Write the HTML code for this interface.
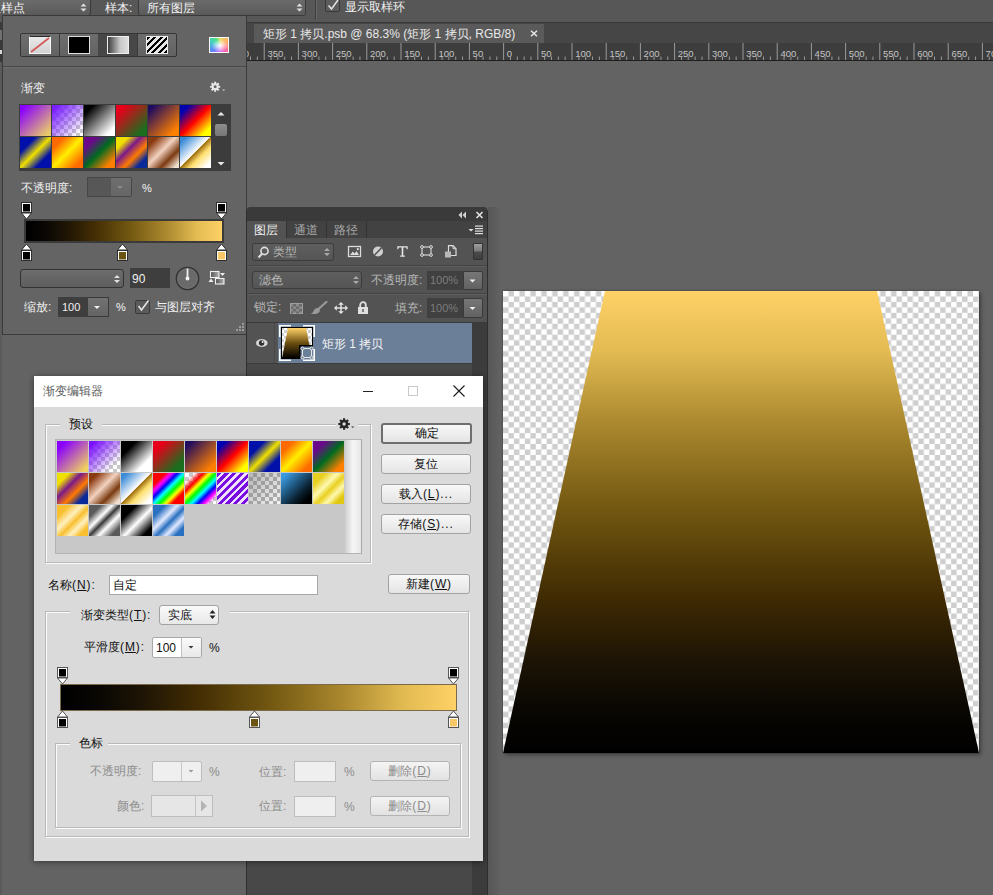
<!DOCTYPE html><html><head><meta charset="utf-8"><style>
*{margin:0;padding:0;box-sizing:border-box}
html,body{width:993px;height:895px;overflow:hidden;background:#636363;font-family:"Liberation Sans",sans-serif;}
.t{position:absolute;white-space:nowrap;line-height:1;}
.as{letter-spacing:0.9px}
div{position:absolute}
svg{display:block}
</style></head><body>
<div style="position:absolute;left:0px;top:0px;width:993px;height:23px;background:#575757;"></div>
<div style="position:absolute;left:0px;top:22px;width:993px;height:1px;background:#383838;"></div>
<div style="position:absolute;left:-10px;top:-2px;width:101px;height:18px;background:linear-gradient(#6c6c6c,#5a5a5a);border:1px solid #3a3a3a;border-radius:3px;"></div>
<div class="t" style="left:-11px;top:1.5px;font-size:12px;color:#f4f4f4;">取样点</div>
<div style="position:absolute;left:80px;top:3px;width:7px;height:9px;"><svg width="7" height="9"><path d="M0.5 3.5 L3.5 0.5 L6.5 3.5 Z M0.5 5.5 L6.5 5.5 L3.5 8.5 Z" fill="#e0e0e0"/></svg></div>
<div class="t" style="left:105px;top:1.5px;font-size:12px;color:#f4f4f4;">样本:</div>
<div style="position:absolute;left:138px;top:-2px;width:168px;height:18px;background:linear-gradient(#6c6c6c,#5a5a5a);border:1px solid #3a3a3a;border-radius:3px;"></div>
<div class="t" style="left:147px;top:1.5px;font-size:12px;color:#f4f4f4;">所有图层</div>
<div style="position:absolute;left:296px;top:3px;width:7px;height:9px;"><svg width="7" height="9"><path d="M0.5 3.5 L3.5 0.5 L6.5 3.5 Z M0.5 5.5 L6.5 5.5 L3.5 8.5 Z" fill="#e0e0e0"/></svg></div>
<div style="position:absolute;left:315px;top:0px;width:1px;height:20px;background:#3e3e3e;"></div>
<div style="position:absolute;left:316px;top:0px;width:1px;height:20px;background:#686868;"></div>
<div style="position:absolute;left:325px;top:-3px;width:15px;height:15px;background:#5c5c5c;border:1px solid #383838;border-radius:2px;"><svg width="14" height="14" style="position:absolute;left:0;top:0"><path d="M2.5 7.5 L5.5 11 L12 2" fill="none" stroke="#e0e0e0" stroke-width="1.6"/></svg></div>
<div class="t" style="left:345px;top:1px;font-size:12px;color:#f0f0f0;">显示取样环</div>
<div style="position:absolute;left:0px;top:15px;width:2px;height:880px;background:#5a5a5a;"></div>
<div style="position:absolute;left:0px;top:22px;width:2px;height:8px;background:#3a3a3a;"></div>
<div style="position:absolute;left:0px;top:30px;width:2px;height:10px;background:#707070;"></div>
<div style="position:absolute;left:0px;top:40px;width:2px;height:22px;background:#383838;"></div>
<div style="position:absolute;left:0px;top:50px;width:2px;height:4px;background:#d8d8d8;"></div>
<div style="position:absolute;left:247px;top:23px;width:746px;height:20px;background:#464646;"></div>
<div style="position:absolute;left:254px;top:24px;width:290px;height:19px;background:#5a5a5a;"></div>
<div class="t" style="left:263px;top:28px;font-size:12px;color:#e8e8e8;">矩形 1 拷贝.psb @ 68.3% (矩形 1 拷贝, RGB/8)</div>
<svg style="position:absolute;left:530px;top:30px" width="8" height="7"><path d="M1 0.8 L7 6.2 M7 0.8 L1 6.2" stroke="#e8e8e8" stroke-width="1.5"/></svg>
<div style="position:absolute;left:247px;top:43px;width:746px;height:17px;background:#3d3d3d;"></div>
<div style="position:absolute;left:247px;top:60px;width:746px;height:1px;background:#1e1e1e;"></div>
<svg style="position:absolute;left:247px;top:43px" width="746" height="17"><rect x="-17.50" y="0" width="1" height="17" fill="#9a9a9a"/><text x="-13.80" y="14" font-size="9.5" fill="#c4c4c4" font-family="Liberation Sans">400</text><rect x="-10.66" y="13.5" width="1" height="3.5" fill="#9a9a9a"/><rect x="-3.82" y="13.5" width="1" height="3.5" fill="#9a9a9a"/><rect x="3.02" y="13.5" width="1" height="3.5" fill="#9a9a9a"/><rect x="9.86" y="13.5" width="1" height="3.5" fill="#9a9a9a"/><rect x="16.70" y="0" width="1" height="17" fill="#9a9a9a"/><text x="20.40" y="14" font-size="9.5" fill="#c4c4c4" font-family="Liberation Sans">350</text><rect x="23.54" y="13.5" width="1" height="3.5" fill="#9a9a9a"/><rect x="30.38" y="13.5" width="1" height="3.5" fill="#9a9a9a"/><rect x="37.22" y="13.5" width="1" height="3.5" fill="#9a9a9a"/><rect x="44.06" y="13.5" width="1" height="3.5" fill="#9a9a9a"/><rect x="50.90" y="0" width="1" height="17" fill="#9a9a9a"/><text x="54.60" y="14" font-size="9.5" fill="#c4c4c4" font-family="Liberation Sans">300</text><rect x="57.74" y="13.5" width="1" height="3.5" fill="#9a9a9a"/><rect x="64.58" y="13.5" width="1" height="3.5" fill="#9a9a9a"/><rect x="71.42" y="13.5" width="1" height="3.5" fill="#9a9a9a"/><rect x="78.26" y="13.5" width="1" height="3.5" fill="#9a9a9a"/><rect x="85.10" y="0" width="1" height="17" fill="#9a9a9a"/><text x="88.80" y="14" font-size="9.5" fill="#c4c4c4" font-family="Liberation Sans">250</text><rect x="91.94" y="13.5" width="1" height="3.5" fill="#9a9a9a"/><rect x="98.78" y="13.5" width="1" height="3.5" fill="#9a9a9a"/><rect x="105.62" y="13.5" width="1" height="3.5" fill="#9a9a9a"/><rect x="112.46" y="13.5" width="1" height="3.5" fill="#9a9a9a"/><rect x="119.30" y="0" width="1" height="17" fill="#9a9a9a"/><text x="123.00" y="14" font-size="9.5" fill="#c4c4c4" font-family="Liberation Sans">200</text><rect x="126.14" y="13.5" width="1" height="3.5" fill="#9a9a9a"/><rect x="132.98" y="13.5" width="1" height="3.5" fill="#9a9a9a"/><rect x="139.82" y="13.5" width="1" height="3.5" fill="#9a9a9a"/><rect x="146.66" y="13.5" width="1" height="3.5" fill="#9a9a9a"/><rect x="153.50" y="0" width="1" height="17" fill="#9a9a9a"/><text x="157.20" y="14" font-size="9.5" fill="#c4c4c4" font-family="Liberation Sans">150</text><rect x="160.34" y="13.5" width="1" height="3.5" fill="#9a9a9a"/><rect x="167.18" y="13.5" width="1" height="3.5" fill="#9a9a9a"/><rect x="174.02" y="13.5" width="1" height="3.5" fill="#9a9a9a"/><rect x="180.86" y="13.5" width="1" height="3.5" fill="#9a9a9a"/><rect x="187.70" y="0" width="1" height="17" fill="#9a9a9a"/><text x="191.40" y="14" font-size="9.5" fill="#c4c4c4" font-family="Liberation Sans">100</text><rect x="194.54" y="13.5" width="1" height="3.5" fill="#9a9a9a"/><rect x="201.38" y="13.5" width="1" height="3.5" fill="#9a9a9a"/><rect x="208.22" y="13.5" width="1" height="3.5" fill="#9a9a9a"/><rect x="215.06" y="13.5" width="1" height="3.5" fill="#9a9a9a"/><rect x="221.90" y="0" width="1" height="17" fill="#9a9a9a"/><text x="225.60" y="14" font-size="9.5" fill="#c4c4c4" font-family="Liberation Sans">50</text><rect x="228.74" y="13.5" width="1" height="3.5" fill="#9a9a9a"/><rect x="235.58" y="13.5" width="1" height="3.5" fill="#9a9a9a"/><rect x="242.42" y="13.5" width="1" height="3.5" fill="#9a9a9a"/><rect x="249.26" y="13.5" width="1" height="3.5" fill="#9a9a9a"/><rect x="256.10" y="0" width="1" height="17" fill="#9a9a9a"/><text x="259.80" y="14" font-size="9.5" fill="#c4c4c4" font-family="Liberation Sans">0</text><rect x="262.94" y="13.5" width="1" height="3.5" fill="#9a9a9a"/><rect x="269.78" y="13.5" width="1" height="3.5" fill="#9a9a9a"/><rect x="276.62" y="13.5" width="1" height="3.5" fill="#9a9a9a"/><rect x="283.46" y="13.5" width="1" height="3.5" fill="#9a9a9a"/><rect x="290.30" y="0" width="1" height="17" fill="#9a9a9a"/><text x="294.00" y="14" font-size="9.5" fill="#c4c4c4" font-family="Liberation Sans">50</text><rect x="297.14" y="13.5" width="1" height="3.5" fill="#9a9a9a"/><rect x="303.98" y="13.5" width="1" height="3.5" fill="#9a9a9a"/><rect x="310.82" y="13.5" width="1" height="3.5" fill="#9a9a9a"/><rect x="317.66" y="13.5" width="1" height="3.5" fill="#9a9a9a"/><rect x="324.50" y="0" width="1" height="17" fill="#9a9a9a"/><text x="328.20" y="14" font-size="9.5" fill="#c4c4c4" font-family="Liberation Sans">100</text><rect x="331.34" y="13.5" width="1" height="3.5" fill="#9a9a9a"/><rect x="338.18" y="13.5" width="1" height="3.5" fill="#9a9a9a"/><rect x="345.02" y="13.5" width="1" height="3.5" fill="#9a9a9a"/><rect x="351.86" y="13.5" width="1" height="3.5" fill="#9a9a9a"/><rect x="358.70" y="0" width="1" height="17" fill="#9a9a9a"/><text x="362.40" y="14" font-size="9.5" fill="#c4c4c4" font-family="Liberation Sans">150</text><rect x="365.54" y="13.5" width="1" height="3.5" fill="#9a9a9a"/><rect x="372.38" y="13.5" width="1" height="3.5" fill="#9a9a9a"/><rect x="379.22" y="13.5" width="1" height="3.5" fill="#9a9a9a"/><rect x="386.06" y="13.5" width="1" height="3.5" fill="#9a9a9a"/><rect x="392.90" y="0" width="1" height="17" fill="#9a9a9a"/><text x="396.60" y="14" font-size="9.5" fill="#c4c4c4" font-family="Liberation Sans">200</text><rect x="399.74" y="13.5" width="1" height="3.5" fill="#9a9a9a"/><rect x="406.58" y="13.5" width="1" height="3.5" fill="#9a9a9a"/><rect x="413.42" y="13.5" width="1" height="3.5" fill="#9a9a9a"/><rect x="420.26" y="13.5" width="1" height="3.5" fill="#9a9a9a"/><rect x="427.10" y="0" width="1" height="17" fill="#9a9a9a"/><text x="430.80" y="14" font-size="9.5" fill="#c4c4c4" font-family="Liberation Sans">250</text><rect x="433.94" y="13.5" width="1" height="3.5" fill="#9a9a9a"/><rect x="440.78" y="13.5" width="1" height="3.5" fill="#9a9a9a"/><rect x="447.62" y="13.5" width="1" height="3.5" fill="#9a9a9a"/><rect x="454.46" y="13.5" width="1" height="3.5" fill="#9a9a9a"/><rect x="461.30" y="0" width="1" height="17" fill="#9a9a9a"/><text x="465.00" y="14" font-size="9.5" fill="#c4c4c4" font-family="Liberation Sans">300</text><rect x="468.14" y="13.5" width="1" height="3.5" fill="#9a9a9a"/><rect x="474.98" y="13.5" width="1" height="3.5" fill="#9a9a9a"/><rect x="481.82" y="13.5" width="1" height="3.5" fill="#9a9a9a"/><rect x="488.66" y="13.5" width="1" height="3.5" fill="#9a9a9a"/><rect x="495.50" y="0" width="1" height="17" fill="#9a9a9a"/><text x="499.20" y="14" font-size="9.5" fill="#c4c4c4" font-family="Liberation Sans">350</text><rect x="502.34" y="13.5" width="1" height="3.5" fill="#9a9a9a"/><rect x="509.18" y="13.5" width="1" height="3.5" fill="#9a9a9a"/><rect x="516.02" y="13.5" width="1" height="3.5" fill="#9a9a9a"/><rect x="522.86" y="13.5" width="1" height="3.5" fill="#9a9a9a"/><rect x="529.70" y="0" width="1" height="17" fill="#9a9a9a"/><text x="533.40" y="14" font-size="9.5" fill="#c4c4c4" font-family="Liberation Sans">400</text><rect x="536.54" y="13.5" width="1" height="3.5" fill="#9a9a9a"/><rect x="543.38" y="13.5" width="1" height="3.5" fill="#9a9a9a"/><rect x="550.22" y="13.5" width="1" height="3.5" fill="#9a9a9a"/><rect x="557.06" y="13.5" width="1" height="3.5" fill="#9a9a9a"/><rect x="563.90" y="0" width="1" height="17" fill="#9a9a9a"/><text x="567.60" y="14" font-size="9.5" fill="#c4c4c4" font-family="Liberation Sans">450</text><rect x="570.74" y="13.5" width="1" height="3.5" fill="#9a9a9a"/><rect x="577.58" y="13.5" width="1" height="3.5" fill="#9a9a9a"/><rect x="584.42" y="13.5" width="1" height="3.5" fill="#9a9a9a"/><rect x="591.26" y="13.5" width="1" height="3.5" fill="#9a9a9a"/><rect x="598.10" y="0" width="1" height="17" fill="#9a9a9a"/><text x="601.80" y="14" font-size="9.5" fill="#c4c4c4" font-family="Liberation Sans">500</text><rect x="604.94" y="13.5" width="1" height="3.5" fill="#9a9a9a"/><rect x="611.78" y="13.5" width="1" height="3.5" fill="#9a9a9a"/><rect x="618.62" y="13.5" width="1" height="3.5" fill="#9a9a9a"/><rect x="625.46" y="13.5" width="1" height="3.5" fill="#9a9a9a"/><rect x="632.30" y="0" width="1" height="17" fill="#9a9a9a"/><text x="636.00" y="14" font-size="9.5" fill="#c4c4c4" font-family="Liberation Sans">550</text><rect x="639.14" y="13.5" width="1" height="3.5" fill="#9a9a9a"/><rect x="645.98" y="13.5" width="1" height="3.5" fill="#9a9a9a"/><rect x="652.82" y="13.5" width="1" height="3.5" fill="#9a9a9a"/><rect x="659.66" y="13.5" width="1" height="3.5" fill="#9a9a9a"/><rect x="666.50" y="0" width="1" height="17" fill="#9a9a9a"/><text x="670.20" y="14" font-size="9.5" fill="#c4c4c4" font-family="Liberation Sans">600</text><rect x="673.34" y="13.5" width="1" height="3.5" fill="#9a9a9a"/><rect x="680.18" y="13.5" width="1" height="3.5" fill="#9a9a9a"/><rect x="687.02" y="13.5" width="1" height="3.5" fill="#9a9a9a"/><rect x="693.86" y="13.5" width="1" height="3.5" fill="#9a9a9a"/><rect x="700.70" y="0" width="1" height="17" fill="#9a9a9a"/><text x="704.40" y="14" font-size="9.5" fill="#c4c4c4" font-family="Liberation Sans">650</text><rect x="707.54" y="13.5" width="1" height="3.5" fill="#9a9a9a"/><rect x="714.38" y="13.5" width="1" height="3.5" fill="#9a9a9a"/><rect x="721.22" y="13.5" width="1" height="3.5" fill="#9a9a9a"/><rect x="728.06" y="13.5" width="1" height="3.5" fill="#9a9a9a"/><rect x="734.90" y="0" width="1" height="17" fill="#9a9a9a"/><text x="738.60" y="14" font-size="9.5" fill="#c4c4c4" font-family="Liberation Sans">700</text><rect x="741.74" y="13.5" width="1" height="3.5" fill="#9a9a9a"/><rect x="748.58" y="13.5" width="1" height="3.5" fill="#9a9a9a"/><rect x="755.42" y="13.5" width="1" height="3.5" fill="#9a9a9a"/><rect x="762.26" y="13.5" width="1" height="3.5" fill="#9a9a9a"/></svg>
<div style="position:absolute;left:503px;top:291px;width:476px;height:462px;background:#fff;box-shadow:2px 2px 4px rgba(0,0,0,0.35),0 0 2px rgba(0,0,0,0.35);"></div>
<svg style="position:absolute;left:503px;top:291px" width="476" height="462"><defs><pattern id="cp" width="10.93" height="10.93" patternUnits="userSpaceOnUse"><rect width="10.93" height="10.93" fill="#fff"/><rect x="5.465" y="0" width="5.465" height="5.465" fill="#cecece"/><rect x="0" y="5.465" width="5.465" height="5.465" fill="#cecece"/></pattern><linearGradient id="cg" x1="0" y1="1" x2="0" y2="0"><stop offset="0" stop-color="#000"/><stop offset="0.1" stop-color="#0a0703"/><stop offset="0.2" stop-color="#1d1405"/><stop offset="0.35" stop-color="#432d03"/><stop offset="0.54" stop-color="#755a12"/><stop offset="0.72" stop-color="#ad8a30"/><stop offset="0.87" stop-color="#e2bb52"/><stop offset="1" stop-color="#ffd166"/></linearGradient></defs><rect width="476" height="462" fill="url(#cp)"/><polygon points="102,0 374,0 476,462 0,462" fill="url(#cg)"/></svg>
<div style="position:absolute;left:2px;top:15px;width:245px;height:320px;background:#646464;border:1px solid #3a3a3a;"></div>
<div style="position:absolute;left:20px;top:33px;width:157px;height:24px;background:linear-gradient(#6e6e6e,#626262);border:1px solid #353535;border-radius:2px;"></div>
<div style="position:absolute;left:98px;top:34px;width:39px;height:22px;background:#474747;"></div>
<div style="position:absolute;left:59px;top:34px;width:1px;height:22px;background:#3a3a3a;"></div>
<div style="position:absolute;left:137px;top:34px;width:1px;height:22px;background:#3a3a3a;"></div>
<div style="position:absolute;left:29px;top:36px;width:22px;height:18px;background:linear-gradient(#eaeaea,#d2d2d2);border:1px solid #f4f4f4;border-top-color:#2a2a2a;"><svg width="20" height="16" style="position:absolute;left:0;top:0"><line x1="1" y1="15" x2="19" y2="1" stroke="#d45a5a" stroke-width="1.8"/></svg></div>
<div style="position:absolute;left:68px;top:36px;width:22px;height:18px;background:#000;border:1px solid #e0e0e0;border-top-color:#d8d8d8;"></div>
<div style="position:absolute;left:107px;top:36px;width:22px;height:18px;background:linear-gradient(90deg,#3e3e3e,#c8c8c8 60%,#dedede);border:1px solid #eeeeee;"></div>
<div style="position:absolute;left:146px;top:36px;width:22px;height:18px;background:repeating-linear-gradient(-45deg,#000 0 2.3px,#e6e6e6 2.3px 4.6px);border:1px solid #eeeeee;"></div>
<div style="position:absolute;left:209px;top:37px;width:20px;height:16px;border:1.5px solid #f8f8f8;background:radial-gradient(ellipse at 55% 55%,#fff 0,rgba(255,255,255,0.6) 25%,rgba(255,255,255,0) 60%),conic-gradient(from 0deg at 55% 50%,#e0e070,#ffb060 60deg,#ff60a0 130deg,#d070f0 180deg,#6080ff 230deg,#40d0c0 290deg,#50e080 330deg,#e0e070);"></div>
<div style="position:absolute;left:3px;top:66px;width:243px;height:1px;background:#474747;"></div>
<div style="position:absolute;left:3px;top:67px;width:243px;height:1px;background:#6c6c6c;"></div>
<div class="t" style="left:21px;top:82px;font-size:12px;color:#f0f0f0;">渐变</div>
<svg style="position:absolute;left:209px;top:81px" width="18" height="12"><g transform="translate(0.8 0.5) scale(0.88)"><circle cx="6.1" cy="6" r="3.9" fill="#e8e8e8"/><rect x="5" y="0.3" width="2.2" height="3" transform="rotate(0 6.1 6)" fill="#e8e8e8"/><rect x="5" y="0.3" width="2.2" height="3" transform="rotate(45 6.1 6)" fill="#e8e8e8"/><rect x="5" y="0.3" width="2.2" height="3" transform="rotate(90 6.1 6)" fill="#e8e8e8"/><rect x="5" y="0.3" width="2.2" height="3" transform="rotate(135 6.1 6)" fill="#e8e8e8"/><rect x="5" y="0.3" width="2.2" height="3" transform="rotate(180 6.1 6)" fill="#e8e8e8"/><rect x="5" y="0.3" width="2.2" height="3" transform="rotate(225 6.1 6)" fill="#e8e8e8"/><rect x="5" y="0.3" width="2.2" height="3" transform="rotate(270 6.1 6)" fill="#e8e8e8"/><rect x="5" y="0.3" width="2.2" height="3" transform="rotate(315 6.1 6)" fill="#e8e8e8"/><circle cx="6.1" cy="6" r="1.7" fill="#646464"/></g><path d="M13.2 8.5 L16.2 8.5 L14.7 10 Z" fill="#d8d8d8"/></svg>
<div style="position:absolute;left:19px;top:104px;width:212px;height:67px;background:#3c3c3c;"></div>
<div style="position:absolute;left:20px;top:105px;width:31px;height:31px;background:linear-gradient(135deg,#8a00ff 10%,#e9c86a 90%);"></div>
<div style="position:absolute;left:52px;top:105px;width:31px;height:31px;background:linear-gradient(135deg,#7a20ff 10%,rgba(160,120,255,0) 90%),repeating-conic-gradient(#c8c8c8 0 25%,#ffffff 0 50%) 0 0/8px 8px;"></div>
<div style="position:absolute;left:84px;top:105px;width:31px;height:31px;background:linear-gradient(135deg,#000 15%,#fff 85%);"></div>
<div style="position:absolute;left:116px;top:105px;width:31px;height:31px;background:linear-gradient(135deg,#e8001a 15%,#1a6e1e 85%);"></div>
<div style="position:absolute;left:148px;top:105px;width:31px;height:31px;background:linear-gradient(135deg,#1e0a60 10%,#ff8000 85%);"></div>
<div style="position:absolute;left:180px;top:105px;width:31px;height:31px;background:linear-gradient(135deg,#0000b0 15%,#ff0000 50%,#ffff00 85%);"></div>
<div style="position:absolute;left:20px;top:137px;width:31px;height:31px;background:linear-gradient(135deg,#0010a8 25%,#f0e000 50%,#0010a8 75%);"></div>
<div style="position:absolute;left:52px;top:137px;width:31px;height:31px;background:linear-gradient(135deg,#ff6a00 20%,#ffee00 50%,#ff6a00 85%);"></div>
<div style="position:absolute;left:84px;top:137px;width:31px;height:31px;background:linear-gradient(135deg,#6a0a8a 20%,#006a20 50%,#ff8000 85%);"></div>
<div style="position:absolute;left:116px;top:137px;width:31px;height:31px;background:linear-gradient(135deg,#f0e000 20%,#7a1a8a 40%,#ff7a00 62%,#0a2a9a 82%);"></div>
<div style="position:absolute;left:148px;top:137px;width:31px;height:31px;background:linear-gradient(135deg,#8a3a10 15%,#f2d2c0 45%,#7a3a10 70%,#f0e0d0 92%);"></div>
<div style="position:absolute;left:180px;top:137px;width:31px;height:31px;background:linear-gradient(135deg,#3a8ad6 10%,#ffffff 48%,#a07010 50%,#ffe070 65%,#ffffff 90%);"></div>
<div style="position:absolute;left:214px;top:111px;width:14px;height:6px;"><svg width="14" height="6"><path d="M3.5 4.5 L7 1 L10.5 4.5 Z" fill="#e8e8e8"/></svg></div>
<div style="position:absolute;left:215px;top:124px;width:12px;height:12px;background:linear-gradient(#8e8e8e,#767676);border-radius:2px;"></div>
<div style="position:absolute;left:214px;top:161px;width:14px;height:6px;"><svg width="14" height="6"><path d="M3.5 1 L10.5 1 L7 4.5 Z" fill="#e8e8e8"/></svg></div>
<div class="t" style="left:21px;top:182px;font-size:12px;color:#f0f0f0;">不透明度:</div>
<div style="position:absolute;left:87px;top:177px;width:25px;height:20px;background:#575757;border:1px solid #464646;border-right:none;"></div>
<div style="position:absolute;left:111px;top:177px;width:21px;height:20px;background:linear-gradient(#6e6e6e,#666);border:1px solid #464646;border-left:none;border-radius:0 2px 2px 0;"><svg width="19" height="18" style="position:absolute;left:0;top:0"><path d="M6 8 L12 8 L9 11 Z" fill="#8a8a8a"/></svg></div>
<div class="t" style="left:142px;top:183px;font-size:11px;color:#f4f4f4;">%</div>
<svg style="position:absolute;left:21px;top:202px" width="12" height="18"><path d="M0.5 11 L10.5 11 L5.5 17 Z" fill="#fff" stroke="#2e2e2e" stroke-width="1"/><rect x="0.5" y="0.5" width="10" height="10" fill="#fff" stroke="#2e2e2e"/><rect x="2" y="2" width="7" height="7.5" fill="#000"/></svg>
<svg style="position:absolute;left:216px;top:202px" width="12" height="18"><path d="M0.5 11 L10.5 11 L5.5 17 Z" fill="#fff" stroke="#2e2e2e" stroke-width="1"/><rect x="0.5" y="0.5" width="10" height="10" fill="#fff" stroke="#2e2e2e"/><rect x="2" y="2" width="7" height="7.5" fill="#000"/></svg>
<div style="position:absolute;left:24px;top:219px;width:200px;height:24px;background:#3a3a3a;"></div>
<div style="position:absolute;left:26px;top:221px;width:196px;height:20px;background:linear-gradient(90deg,#000 0%,#0a0703 10%,#1d1405 20%,#432d03 35%,#755a12 54%,#ad8a30 72%,#e2bb52 87%,#ffd166 100%);"></div>
<svg style="position:absolute;left:21px;top:244px" width="12" height="18"><path d="M0.5 6 L10.5 6 L5.5 0 Z" fill="#fff" stroke="#2e2e2e" stroke-width="1"/><rect x="0.5" y="6.5" width="10" height="10" fill="#fff" stroke="#2e2e2e"/><rect x="2" y="8" width="7" height="7.5" fill="#000"/></svg>
<svg style="position:absolute;left:117px;top:244px" width="12" height="18"><path d="M0.5 6 L10.5 6 L5.5 0 Z" fill="#fff" stroke="#2e2e2e" stroke-width="1"/><rect x="0.5" y="6.5" width="10" height="10" fill="#fff" stroke="#2e2e2e"/><rect x="2" y="8" width="7" height="7.5" fill="#6b5410"/></svg>
<svg style="position:absolute;left:216px;top:244px" width="12" height="18"><path d="M0.5 6 L10.5 6 L5.5 0 Z" fill="#fff" stroke="#2e2e2e" stroke-width="1"/><rect x="0.5" y="6.5" width="10" height="10" fill="#fff" stroke="#2e2e2e"/><rect x="2" y="8" width="7" height="7.5" fill="#f8c866"/></svg>
<div style="position:absolute;left:20px;top:269px;width:104px;height:19px;background:linear-gradient(#6c6c6c,#5e5e5e);border:1px solid #333;border-radius:3px;"><svg width="10" height="14" style="position:absolute;left:91px;top:2px"><path d="M2 6 L5 3 L8 6 Z M2 8 L8 8 L5 11 Z" fill="#e0e0e0"/></svg></div>
<div style="position:absolute;left:130px;top:268px;width:40px;height:20px;background:#3e3e3e;"></div>
<div class="t" style="left:132px;top:273px;font-size:12px;color:#f0f0f0;">90</div>
<svg style="position:absolute;left:175px;top:266px" width="25" height="25"><circle cx="12.5" cy="12.5" r="11.2" fill="#6a6a6a" stroke="#333" stroke-width="1.3"/><circle cx="12.5" cy="12.5" r="9.8" fill="none" stroke="#747474" stroke-width="0.8"/><line x1="12.5" y1="2.5" x2="12.5" y2="12" stroke="#ececec" stroke-width="1.8"/><circle cx="12.5" cy="12.5" r="1.9" fill="#f4f4f4"/></svg>
<svg style="position:absolute;left:208px;top:270px" width="18" height="15"><defs><linearGradient id="rv" x1="0" x2="1"><stop offset="0" stop-color="#505050"/><stop offset="1" stop-color="#b0b0b0"/></linearGradient></defs><rect x="2.5" y="1.5" width="8.5" height="6" fill="url(#rv)" stroke="#eee" stroke-width="1.1"/><rect x="7.5" y="8.5" width="8.5" height="5.5" fill="url(#rv)" stroke="#eee" stroke-width="1.1"/><path d="M12 3 L17 3 L14.5 6 Z" fill="#eee"/><path d="M0.5 12 L5.5 12 L3 8.5 Z" fill="#eee"/></svg>
<div class="t" style="left:24px;top:301px;font-size:12px;color:#f0f0f0;">缩放:</div>
<div style="position:absolute;left:58px;top:297px;width:31px;height:20px;background:#3e3e3e;"></div>
<div class="t" style="left:62px;top:302px;font-size:11px;color:#f0f0f0;">100</div>
<div style="position:absolute;left:88px;top:297px;width:21px;height:20px;background:linear-gradient(#727272,#646464);border:1px solid #3a3a3a;border-left:none;"><svg width="20" height="18" style="position:absolute;left:0;top:0"><path d="M6 8 L12 8 L9 11 Z" fill="#f0f0f0"/></svg></div>
<div class="t" style="left:116px;top:302px;font-size:11px;color:#f4f4f4;">%</div>
<div style="position:absolute;left:135px;top:300px;width:15px;height:14px;background:#5a5a5a;border:1px solid #3a3a3a;border-radius:2px;"><svg width="14" height="14" style="position:absolute;left:0;top:-2px"><path d="M2.5 7 L5.5 11 L12.5 1.5" fill="none" stroke="#e6e6e6" stroke-width="1.6"/></svg></div>
<div class="t" style="left:155px;top:301px;font-size:12px;color:#f0f0f0;">与图层对齐</div>
<svg style="position:absolute;left:236px;top:323px" width="9" height="10"><g fill="#9a9a9a"><rect x="6" y="0" width="2" height="2"/><rect x="3" y="3" width="2" height="2"/><rect x="6" y="3" width="2" height="2"/><rect x="0" y="6" width="2" height="2"/><rect x="3" y="6" width="2" height="2"/><rect x="6" y="6" width="2" height="2"/></g></svg>
<div style="position:absolute;left:488px;top:207px;width:14px;height:688px;background:linear-gradient(90deg,rgba(0,0,0,0.13),rgba(0,0,0,0));"></div>
<div style="position:absolute;left:246px;top:207px;width:242px;height:688px;background:#2e2e2e;border-radius:5px 5px 0 0;"></div>
<div style="position:absolute;left:247px;top:207px;width:240px;height:688px;background:#535353;border-radius:4px 4px 0 0;"></div>
<div style="position:absolute;left:247px;top:207px;width:240px;height:14px;background:#3a3a3a;border-radius:4px 4px 0 0;"></div>
<svg style="position:absolute;left:458px;top:211px" width="28" height="8"><path d="M4 0.5 L0.5 4 L4 7.5 Z M8 0.5 L4.5 4 L8 7.5 Z" fill="#d0d0d0"/><path d="M18.5 1 L24.5 7 M24.5 1 L18.5 7" stroke="#e0e0e0" stroke-width="1.6"/></svg>
<div style="position:absolute;left:247px;top:221px;width:240px;height:17px;background:#424242;"></div>
<div style="position:absolute;left:247px;top:221px;width:39px;height:17px;background:#535353;"></div>
<div style="position:absolute;left:286px;top:221px;width:1px;height:17px;background:#333;"></div>
<div style="position:absolute;left:326px;top:221px;width:1px;height:17px;background:#333;"></div>
<div style="position:absolute;left:366px;top:221px;width:1px;height:17px;background:#333;"></div>
<div class="t" style="left:254px;top:224px;font-size:12px;color:#f0f0f0;">图层</div>
<div class="t" style="left:294px;top:224px;font-size:12px;color:#a8a8a8;">通道</div>
<div class="t" style="left:334px;top:224px;font-size:12px;color:#a8a8a8;">路径</div>
<svg style="position:absolute;left:468px;top:225px" width="16" height="10"><path d="M0.5 4 L5.5 4 L3 6.5 Z" fill="#e0e0e0"/><g fill="#e0e0e0"><rect x="7" y="0.5" width="8" height="1.2"/><rect x="7" y="3" width="8" height="1.2"/><rect x="7" y="5.5" width="8" height="1.2"/><rect x="7" y="8" width="8" height="1.2"/></g></svg>
<div style="position:absolute;left:252px;top:243px;width:82px;height:18px;background:linear-gradient(#5e5e5e,#555);border:1px solid #3c3c3c;border-radius:3px;"></div>
<svg style="position:absolute;left:257px;top:246px" width="13" height="13"><circle cx="7.5" cy="5" r="3.6" fill="none" stroke="#e0e0e0" stroke-width="1.6"/><line x1="5" y1="7.8" x2="1.5" y2="11.5" stroke="#e0e0e0" stroke-width="2"/></svg>
<div class="t" style="left:273px;top:246px;font-size:12px;color:#b4b4b4;">类型</div>
<div style="position:absolute;left:324px;top:247px;width:6px;height:10px;"><svg width="6" height="10"><path d="M0 4 L3 1 L6 4 Z M0 6 L6 6 L3 9 Z" fill="#a8a8a8"/></svg></div>
<svg style="position:absolute;left:347px;top:245px" width="15" height="13"><rect x="1.5" y="1.5" width="12" height="10" fill="none" stroke="#dcdcdc" stroke-width="1.3"/><path d="M3 10 L5.8 6.5 L7.6 8.5 L9.6 6 L12 10 Z" fill="#dcdcdc"/><circle cx="10.8" cy="4.2" r="1.1" fill="#dcdcdc"/></svg>
<svg style="position:absolute;left:372px;top:246px" width="12" height="11"><circle cx="6" cy="5.5" r="5" fill="#d0d0d0"/><path d="M2.6 9 L9.4 2" stroke="#535353" stroke-width="1.5"/></svg>
<svg style="position:absolute;left:397px;top:246px" width="11" height="11"><path d="M0.3 0.3 H10.7 V3.2 H9.7 L9.3 1.6 H6.3 V9.4 H7.8 V10.7 H3.2 V9.4 H4.7 V1.6 H1.7 L1.3 3.2 H0.3 Z" fill="#e6e6e6"/></svg>
<svg style="position:absolute;left:420px;top:245px" width="13" height="12"><rect x="2" y="2" width="9" height="8" fill="none" stroke="#dcdcdc" stroke-width="1.1"/><g fill="#535353" stroke="#dcdcdc" stroke-width="1"><circle cx="2" cy="2" r="1.4"/><circle cx="11" cy="2" r="1.4"/><circle cx="2" cy="10" r="1.4"/><circle cx="11" cy="10" r="1.4"/></g></svg>
<svg style="position:absolute;left:444px;top:245px" width="13" height="13"><path d="M4.5 0.7 H9 L12 3.7 V10.5 H4.5 Z" fill="#535353" stroke="#dcdcdc" stroke-width="1.2"/><path d="M9 0.7 V3.7 H12" fill="none" stroke="#dcdcdc" stroke-width="1"/><rect x="1" y="6.5" width="6" height="6" fill="#b8b8b8"/></svg>
<div style="position:absolute;left:473px;top:243px;width:10px;height:17px;background:linear-gradient(#a0a0a0,#7a7a7a 45%,#4a4a4a 55%,#3e3e3e);border:1px solid #333;border-radius:1px;"></div>
<div style="position:absolute;left:247px;top:265px;width:240px;height:1px;background:#444;"></div>
<div style="position:absolute;left:247px;top:266px;width:240px;height:1px;background:#5e5e5e;"></div>
<div style="position:absolute;left:252px;top:271px;width:110px;height:18px;background:linear-gradient(#5e5e5e,#555);border:1px solid #3c3c3c;border-radius:3px;"></div>
<div class="t" style="left:259px;top:274px;font-size:12px;color:#b8b8b8;">滤色</div>
<div style="position:absolute;left:353px;top:275px;width:6px;height:10px;"><svg width="6" height="10"><path d="M0 4 L3 1 L6 4 Z M0 6 L6 6 L3 9 Z" fill="#a8a8a8"/></svg></div>
<div class="t" style="left:371px;top:274px;font-size:12px;color:#b8b8b8;">不透明度:</div>
<div style="position:absolute;left:427px;top:271px;width:36px;height:19px;background:#404040;"></div>
<div class="t" style="left:430px;top:275px;font-size:11px;color:#7c7c7c;">100%</div>
<div style="position:absolute;left:463px;top:271px;width:20px;height:19px;background:linear-gradient(#767676,#626262);border:1px solid #3a3a3a;border-radius:0 2px 2px 0;"><svg width="18" height="17" style="position:absolute;left:0;top:0"><path d="M5.5 7.5 L11.5 7.5 L8.5 10.5 Z" fill="#f0f0f0"/></svg></div>
<div style="position:absolute;left:247px;top:293px;width:240px;height:1px;background:#444;"></div>
<div style="position:absolute;left:247px;top:294px;width:240px;height:1px;background:#5e5e5e;"></div>
<div class="t" style="left:254px;top:301px;font-size:12px;color:#b8b8b8;">锁定:</div>
<svg style="position:absolute;left:290px;top:303px" width="13" height="11"><rect x="0.5" y="0.5" width="12" height="10" fill="#8a8a8a" stroke="#9e9e9e"/><g fill="#6a6a6a"><rect x="3" y="1" width="3" height="2.5"/><rect x="9" y="1" width="3" height="2.5"/><rect x="1" y="3.5" width="2" height="2.5"/><rect x="6" y="3.5" width="3" height="2.5"/><rect x="3" y="6" width="3" height="2.5"/><rect x="9" y="6" width="3" height="2.5"/><rect x="1" y="8.5" width="2" height="2"/><rect x="6" y="8.5" width="3" height="2"/></g></svg>
<svg style="position:absolute;left:310px;top:301px" width="18" height="14"><path d="M16.5 0.8 L8.5 8" stroke="#9a9a9a" stroke-width="2.2" stroke-linecap="round"/><path d="M8.8 7.2 C6 6.5 4.2 8.5 3.6 10 C3 11.5 1.8 12.2 0.5 12.6 C3.5 13.6 8.2 13 9.6 10.4 C10.2 9.2 9.8 8 8.8 7.2 Z" fill="#9a9a9a"/></svg>
<svg style="position:absolute;left:334px;top:302px" width="14" height="12"><g stroke="#e4e4e4" stroke-width="1.4" fill="none"><line x1="7" y1="1.5" x2="7" y2="10.5"/><line x1="1.5" y1="6" x2="12.5" y2="6"/></g><g fill="#e4e4e4"><path d="M7 0 L9.8 2.8 L4.2 2.8 Z"/><path d="M7 12 L9.8 9.2 L4.2 9.2 Z"/><path d="M0 6 L2.8 3.2 L2.8 8.8 Z"/><path d="M14 6 L11.2 3.2 L11.2 8.8 Z"/></g></svg>
<svg style="position:absolute;left:357px;top:301px" width="12" height="13"><path d="M3.2 6 V4 A2.8 2.8 0 0 1 8.8 4 V6" fill="none" stroke="#e0e0e0" stroke-width="1.8"/><rect x="1" y="6" width="10" height="7" fill="#e0e0e0"/><rect x="5.3" y="8" width="1.4" height="3" fill="#535353"/></svg>
<div class="t" style="left:395px;top:302px;font-size:12px;color:#b8b8b8;">填充:</div>
<div style="position:absolute;left:427px;top:298px;width:36px;height:20px;background:#404040;"></div>
<div class="t" style="left:430px;top:303px;font-size:11px;color:#7c7c7c;">100%</div>
<div style="position:absolute;left:463px;top:298px;width:20px;height:20px;background:linear-gradient(#767676,#626262);border:1px solid #3a3a3a;border-radius:0 2px 2px 0;"><svg width="18" height="18" style="position:absolute;left:0;top:0"><path d="M5.5 8 L11.5 8 L8.5 11 Z" fill="#f0f0f0"/></svg></div>
<div style="position:absolute;left:247px;top:322px;width:240px;height:1px;background:#3a3a3a;"></div>
<div style="position:absolute;left:247px;top:323px;width:225px;height:572px;background:#484848;"></div>
<div style="position:absolute;left:472px;top:323px;width:15px;height:572px;background:#3c3c3c;"></div>
<div style="position:absolute;left:247px;top:323px;width:225px;height:40px;background:#535353;"></div>
<div style="position:absolute;left:274px;top:323px;width:1px;height:40px;background:#4a4a4a;"></div>
<div style="position:absolute;left:278px;top:323px;width:194px;height:40px;background:#6b7f98;"></div>
<div style="position:absolute;left:247px;top:363px;width:225px;height:1px;background:#3c3c3c;"></div>
<svg style="position:absolute;left:255px;top:338px" width="15" height="10"><ellipse cx="6.8" cy="5" rx="6.2" ry="4.3" fill="#d8d8d8" stroke="#3a3a3a" stroke-width="0.6"/><circle cx="6.6" cy="5" r="2.7" fill="#2e2e2e"/><circle cx="7.6" cy="3.9" r="1" fill="#f0f0f0"/></svg>
<svg style="position:absolute;left:278px;top:324px" width="38" height="38"><g stroke="#ffffff" stroke-width="1.6" fill="none"><path d="M1.8 13 V1.8 H13"/><path d="M25 1.8 H36.2 V13"/><path d="M36.2 25 V36.2 H25"/><path d="M13 36.2 H1.8 V25"/></g></svg>
<svg style="position:absolute;left:281px;top:327px" width="32" height="32"><defs><pattern id="ck" width="6" height="6" patternUnits="userSpaceOnUse"><rect width="6" height="6" fill="#fff"/><rect width="3" height="3" fill="#d0d0d0"/><rect x="3" y="3" width="3" height="3" fill="#d0d0d0"/></pattern><linearGradient id="tg" x1="0" y1="1" x2="0" y2="0"><stop offset="0" stop-color="#000"/><stop offset="0.5" stop-color="#6b4e10"/><stop offset="1" stop-color="#ffd166"/></linearGradient></defs><rect x="0" y="0" width="32" height="32" fill="#000"/><rect x="1" y="1" width="30" height="30" fill="url(#ck)"/><polygon points="7,1 25,1 31,31 1,31" fill="url(#tg)"/><rect x="18" y="18" width="14" height="14" fill="#000"/><rect x="19.5" y="19.5" width="13" height="13" fill="#6b7f98"/></svg>
<svg style="position:absolute;left:300px;top:346px" width="14" height="14"><rect x="2.5" y="2.5" width="9" height="9" fill="none" stroke="#e8e8e8" stroke-width="1"/><g fill="#6b7f98" stroke="#e8e8e8" stroke-width="1"><circle cx="2.5" cy="2.5" r="1.5"/><circle cx="11.5" cy="2.5" r="1.5"/><circle cx="2.5" cy="11.5" r="1.5"/><circle cx="11.5" cy="11.5" r="1.5"/></g></svg>
<div class="t" style="left:322px;top:338px;font-size:12px;color:#f4f4f4;">矩形 1 拷贝</div>
<div style="position:absolute;left:34px;top:376px;width:449px;height:485px;box-shadow:0 1px 6px rgba(0,0,0,0.45);"></div>
<div style="position:absolute;left:34px;top:376px;width:449px;height:485px;background:#dadada;"></div>
<div style="position:absolute;left:34px;top:376px;width:449px;height:31px;background:#ffffff;"></div>
<div class="t" style="left:43px;top:385px;font-size:12px;color:#5c5c5c;">渐变编辑器</div>
<div style="position:absolute;left:363px;top:391px;width:10px;height:1px;background:#222;"></div>
<div style="position:absolute;left:408px;top:386px;width:10px;height:10px;border:1px solid #c8c8c8;"></div>
<svg style="position:absolute;left:453px;top:385px" width="12" height="12"><path d="M0.5 0.5 L11.5 11.5 M11.5 0.5 L0.5 11.5" stroke="#1a1a1a" stroke-width="1.1"/></svg>
<div style="position:absolute;left:45px;top:424px;width:326px;height:139px;border:1px solid #b9b9b9;box-shadow:1px 1px 0 #fbfbfb inset, 1px 1px 0 #fbfbfb;"></div>
<div style="position:absolute;left:60px;top:418px;width:42px;height:14px;background:#dadada;"></div>
<div class="t" style="left:69px;top:418px;font-size:12px;color:#111;">预设</div>
<div style="position:absolute;left:336px;top:418px;width:22px;height:14px;background:#dadada;"></div>
<svg style="position:absolute;left:338px;top:418px" width="18" height="12"><circle cx="6.1" cy="6" r="3.9" fill="#222"/><rect x="5" y="0.3" width="2.2" height="3" transform="rotate(0 6.1 6)" fill="#222"/><rect x="5" y="0.3" width="2.2" height="3" transform="rotate(45 6.1 6)" fill="#222"/><rect x="5" y="0.3" width="2.2" height="3" transform="rotate(90 6.1 6)" fill="#222"/><rect x="5" y="0.3" width="2.2" height="3" transform="rotate(135 6.1 6)" fill="#222"/><rect x="5" y="0.3" width="2.2" height="3" transform="rotate(180 6.1 6)" fill="#222"/><rect x="5" y="0.3" width="2.2" height="3" transform="rotate(225 6.1 6)" fill="#222"/><rect x="5" y="0.3" width="2.2" height="3" transform="rotate(270 6.1 6)" fill="#222"/><rect x="5" y="0.3" width="2.2" height="3" transform="rotate(315 6.1 6)" fill="#222"/><circle cx="6.1" cy="6" r="1.7" fill="#dadada"/><path d="M13.2 8.5 L16.2 8.5 L14.7 10 Z" fill="#333"/></svg>
<div style="position:absolute;left:55px;top:439px;width:307px;height:115px;background:#c8c8c8;border:1px solid #b4b4b4;border-right:none;"></div>
<div style="position:absolute;left:56.8px;top:440.6px;width:31px;height:31px;background:linear-gradient(135deg,#8a00ff 15%,#f0d060 90%);"></div>
<div style="position:absolute;left:88.8px;top:440.6px;width:31px;height:31px;background:linear-gradient(135deg,#7a10ff 10%,rgba(160,120,255,0) 80%),repeating-conic-gradient(#c8c8c8 0 25%,#ffffff 0 50%) 0 0/8px 8px;"></div>
<div style="position:absolute;left:120.8px;top:440.6px;width:31px;height:31px;background:linear-gradient(135deg,#000 25%,#fff 75%);"></div>
<div style="position:absolute;left:152.8px;top:440.6px;width:31px;height:31px;background:linear-gradient(135deg,#e8001a 20%,#1a6e1e 80%);"></div>
<div style="position:absolute;left:184.8px;top:440.6px;width:31px;height:31px;background:linear-gradient(135deg,#1e0a60 10%,#ff8000 85%);"></div>
<div style="position:absolute;left:216.8px;top:440.6px;width:31px;height:31px;background:linear-gradient(135deg,#0000b0 15%,#ff0000 50%,#ffff00 85%);"></div>
<div style="position:absolute;left:248.8px;top:440.6px;width:31px;height:31px;background:linear-gradient(135deg,#0010a8 25%,#f0e000 50%,#0010a8 75%);"></div>
<div style="position:absolute;left:280.8px;top:440.6px;width:31px;height:31px;background:linear-gradient(135deg,#ff6a00 20%,#ffee00 50%,#ff6a00 85%);"></div>
<div style="position:absolute;left:312.8px;top:440.6px;width:31px;height:31px;background:linear-gradient(135deg,#6a0a8a 20%,#006a20 50%,#ff8000 85%);"></div>
<div style="position:absolute;left:56.8px;top:472.6px;width:31px;height:31px;background:linear-gradient(135deg,#f0e000 20%,#7a1a8a 40%,#ff7a00 62%,#0a2a9a 82%);"></div>
<div style="position:absolute;left:88.8px;top:472.6px;width:31px;height:31px;background:linear-gradient(135deg,#8a3a10 15%,#f2d2c0 45%,#7a3a10 70%,#f0e0d0 92%);"></div>
<div style="position:absolute;left:120.8px;top:472.6px;width:31px;height:31px;background:linear-gradient(135deg,#3a8ad6 10%,#ffffff 48%,#a07010 50%,#ffe070 65%,#ffffff 90%);"></div>
<div style="position:absolute;left:152.8px;top:472.6px;width:31px;height:31px;background:linear-gradient(135deg,#ff0000 20%,#ff00ff 30%,#0000ff 40%,#00ffff 50%,#00ff00 60%,#ffff00 70%,#ff0000 80%);"></div>
<div style="position:absolute;left:184.8px;top:472.6px;width:31px;height:31px;background:linear-gradient(135deg,rgba(255,0,0,0) 15%,#ff0000 30%,#ffff00 40%,#00ff00 50%,#00ffff 60%,#0000ff 70%,#ff00ff 80%,rgba(255,0,255,0) 90%),repeating-conic-gradient(#c8c8c8 0 25%,#ffffff 0 50%) 0 0/8px 8px;"></div>
<div style="position:absolute;left:216.8px;top:472.6px;width:31px;height:31px;background:repeating-linear-gradient(135deg,#7a10e0 0 3px,#f0e0ff 3px 5.5px);"></div>
<div style="position:absolute;left:248.8px;top:472.6px;width:31px;height:31px;background:linear-gradient(135deg,rgba(120,120,120,.5),rgba(255,255,255,0)),repeating-conic-gradient(#b0b0b0 0 25%,#f4f4f4 0 50%) 0 0/8px 8px;"></div>
<div style="position:absolute;left:280.8px;top:472.6px;width:31px;height:31px;background:linear-gradient(135deg,#3a9ae0 10%,#0a2030 65%,#000 85%);"></div>
<div style="position:absolute;left:312.8px;top:472.6px;width:31px;height:31px;background:linear-gradient(135deg,#e8d020 20%,#fff8b0 40%,#e8d020 55%,#fff8b0 70%,#e0c810 85%);"></div>
<div style="position:absolute;left:56.8px;top:504.6px;width:31px;height:31px;background:linear-gradient(135deg,#f8c030 20%,#fff0c0 40%,#f8c030 55%,#fff0c0 70%,#f8c030 85%);"></div>
<div style="position:absolute;left:88.8px;top:504.6px;width:31px;height:31px;background:linear-gradient(135deg,#5a5a5a 20%,#ffffff 38%,#3a3a3a 50%,#ffffff 65%,#5a5a5a 85%);"></div>
<div style="position:absolute;left:120.8px;top:504.6px;width:31px;height:31px;background:linear-gradient(135deg,#000 25%,#ffffff 55%,#000 85%);"></div>
<div style="position:absolute;left:152.8px;top:504.6px;width:31px;height:31px;background:linear-gradient(135deg,#2a70c0 20%,#e0e8ff 40%,#2a70c0 55%,#e0e8ff 70%,#2a70c0 85%);"></div>
<div style="position:absolute;left:345px;top:440px;width:17px;height:113px;background:linear-gradient(90deg,#cfcfcf,#f6f6f6 50%,#e6e6e6);border-right:1px solid #a8a8a8;"></div>
<div style="position:absolute;left:381px;top:423px;width:91px;height:21px;background:linear-gradient(#f8f8f8,#e4e4e4);border:2px solid #6e6e6e;border-radius:3px;"></div>
<div class="t" style="left:381px;top:427px;font-size:12px;color:#111;width:91px;text-align:center;">确定</div>
<div style="position:absolute;left:381px;top:454px;width:90px;height:20px;background:linear-gradient(#f8f8f8,#e4e4e4);border:1px solid #a2a2a2;border-radius:3px;"></div>
<div class="t" style="left:381px;top:458px;font-size:12px;color:#111;width:90px;text-align:center;">复位</div>
<div style="position:absolute;left:381px;top:484px;width:90px;height:20px;background:linear-gradient(#f8f8f8,#e4e4e4);border:1px solid #a2a2a2;border-radius:3px;"></div>
<div class="t" style="left:381px;top:488px;font-size:12px;color:#111;width:90px;text-align:center;">载入<span class="as">(<u>L</u>)...</span></div>
<div style="position:absolute;left:381px;top:514px;width:90px;height:20px;background:linear-gradient(#f8f8f8,#e4e4e4);border:1px solid #a2a2a2;border-radius:3px;"></div>
<div class="t" style="left:381px;top:518px;font-size:12px;color:#111;width:90px;text-align:center;">存储<span class="as">(<u>S</u>)...</span></div>
<div class="t" style="left:48px;top:579px;font-size:12px;color:#111;">名称<span class="as">(<u>N</u>):</span></div>
<div style="position:absolute;left:109px;top:575px;width:209px;height:20px;background:#fff;border:1px solid #a8a8a8;"></div>
<div class="t" style="left:113px;top:579px;font-size:12px;color:#111;">自定</div>
<div style="position:absolute;left:388px;top:574px;width:82px;height:20px;background:linear-gradient(#f8f8f8,#e4e4e4);border:1px solid #a2a2a2;border-radius:3px;"></div>
<div class="t" style="left:388px;top:578px;font-size:12px;color:#111;width:82px;text-align:center;">新建<span class="as">(<u>W</u>)</span></div>
<div style="position:absolute;left:45px;top:611px;width:424px;height:226px;border:1px solid #b9b9b9;box-shadow:1px 1px 0 #fbfbfb inset, 1px 1px 0 #fbfbfb;"></div>
<div style="position:absolute;left:70px;top:603px;width:160px;height:22px;background:#dadada;"></div>
<div class="t" style="left:81px;top:609px;font-size:12px;color:#111;">渐变类型<span class="as">(<u>T</u>):</span></div>
<div style="position:absolute;left:159px;top:605px;width:60px;height:20px;background:linear-gradient(#fafafa,#e8e8e8);border:1px solid #a2a2a2;border-radius:3px;"></div>
<div class="t" style="left:168px;top:609px;font-size:12px;color:#111;">实底</div>
<div style="position:absolute;left:209px;top:609px;width:7px;height:11px;"><svg width="7" height="11"><path d="M0.5 4.5 L3.5 1 L6.5 4.5 Z M0.5 6.5 L6.5 6.5 L3.5 10 Z" fill="#222"/></svg></div>
<div class="t" style="left:84px;top:641px;font-size:12px;color:#111;">平滑度<span class="as">(<u>M</u>):</span></div>
<div style="position:absolute;left:152px;top:637px;width:50px;height:21px;background:#fff;border:1px solid #a8a8a8;border-radius:2px;"></div>
<div style="position:absolute;left:181px;top:638px;width:20px;height:19px;background:linear-gradient(#fafafa,#e8e8e8);border-left:1px solid #c0c0c0;"><svg width="20" height="19"><path d="M6.5 8 L11.5 8 L9 10.5 Z" fill="#333"/></svg></div>
<div class="t" style="left:156px;top:642px;font-size:12px;color:#111;">100</div>
<div class="t" style="left:209px;top:642px;font-size:12px;color:#111;">%</div>
<div style="position:absolute;left:60px;top:684px;width:397px;height:27px;background:#7a6a4a;"></div>
<div style="position:absolute;left:61px;top:685px;width:395px;height:25px;background:linear-gradient(90deg,#000 0%,#0a0703 10%,#1d1405 20%,#432d03 35%,#755a12 54%,#ad8a30 72%,#e2bb52 87%,#ffd166 100%);"></div>
<svg style="position:absolute;left:57px;top:667px" width="12" height="18"><path d="M0.5 11 L10.5 11 L5.5 17 Z" fill="#fff" stroke="#555" stroke-width="1"/><rect x="0.5" y="0.5" width="10" height="10" fill="#fff" stroke="#555"/><rect x="2" y="2" width="7" height="7.5" fill="#000"/></svg>
<svg style="position:absolute;left:448px;top:667px" width="12" height="18"><path d="M0.5 11 L10.5 11 L5.5 17 Z" fill="#fff" stroke="#555" stroke-width="1"/><rect x="0.5" y="0.5" width="10" height="10" fill="#fff" stroke="#555"/><rect x="2" y="2" width="7" height="7.5" fill="#000"/></svg>
<svg style="position:absolute;left:57px;top:711px" width="12" height="18"><path d="M0.5 6 L10.5 6 L5.5 0 Z" fill="#fff" stroke="#555" stroke-width="1"/><rect x="0.5" y="6.5" width="10" height="10" fill="#fff" stroke="#555"/><rect x="2" y="8" width="7" height="7.5" fill="#000"/></svg>
<svg style="position:absolute;left:249px;top:711px" width="12" height="18"><path d="M0.5 6 L10.5 6 L5.5 0 Z" fill="#fff" stroke="#555" stroke-width="1"/><rect x="0.5" y="6.5" width="10" height="10" fill="#fff" stroke="#555"/><rect x="2" y="8" width="7" height="7.5" fill="#6b5410"/></svg>
<svg style="position:absolute;left:448px;top:711px" width="12" height="18"><path d="M0.5 6 L10.5 6 L5.5 0 Z" fill="#fff" stroke="#555" stroke-width="1"/><rect x="0.5" y="6.5" width="10" height="10" fill="#fff" stroke="#555"/><rect x="2" y="8" width="7" height="7.5" fill="#f8c866"/></svg>
<div style="position:absolute;left:55px;top:743px;width:406px;height:85px;border:1px solid #b9b9b9;box-shadow:1px 1px 0 #fbfbfb inset, 1px 1px 0 #fbfbfb;"></div>
<div style="position:absolute;left:70px;top:736px;width:38px;height:14px;background:#dadada;"></div>
<div class="t" style="left:79px;top:737px;font-size:12px;color:#111;">色标</div>
<div class="t" style="left:90px;top:765px;font-size:12px;color:#8c8c8c;">不透明度:</div>
<div style="position:absolute;left:152px;top:761px;width:50px;height:21px;background:#efefef;border:1px solid #bdbdbd;border-radius:2px;"></div>
<div style="position:absolute;left:181px;top:762px;width:20px;height:19px;border-left:1px solid #c8c8c8;"><svg width="20" height="19"><path d="M6.5 8 L11.5 8 L9 10.5 Z" fill="#9a9a9a"/></svg></div>
<div class="t" style="left:209px;top:766px;font-size:12px;color:#8c8c8c;">%</div>
<div class="t" style="left:259px;top:766px;font-size:12px;color:#8c8c8c;">位置:</div>
<div style="position:absolute;left:294px;top:761px;width:42px;height:21px;background:#efefef;border:1px solid #bdbdbd;"></div>
<div class="t" style="left:344px;top:766px;font-size:12px;color:#8c8c8c;">%</div>
<div style="position:absolute;left:370px;top:761px;width:80px;height:20px;background:linear-gradient(#f4f4f4,#e2e2e2);border:1px solid #b4b4b4;border-radius:3px;"></div>
<div class="t" style="left:370px;top:765px;font-size:12px;color:#8c8c8c;width:80px;text-align:center;">删除<span class="as">(<u>D</u>)</span></div>
<div class="t" style="left:117px;top:800px;font-size:12px;color:#8c8c8c;">颜色:</div>
<div style="position:absolute;left:151px;top:795px;width:62px;height:22px;background:#e6e6e6;border:1px solid #bdbdbd;"></div>
<div style="position:absolute;left:195px;top:796px;width:1px;height:20px;background:#c4c4c4;"></div>
<svg style="position:absolute;left:200px;top:800px" width="8" height="12"><path d="M1 0.5 L7 6 L1 11.5 Z" fill="#b4b4b4"/></svg>
<div class="t" style="left:259px;top:800px;font-size:12px;color:#8c8c8c;">位置:</div>
<div style="position:absolute;left:294px;top:796px;width:42px;height:21px;background:#efefef;border:1px solid #bdbdbd;"></div>
<div class="t" style="left:344px;top:801px;font-size:12px;color:#8c8c8c;">%</div>
<div style="position:absolute;left:370px;top:796px;width:80px;height:20px;background:linear-gradient(#f4f4f4,#e2e2e2);border:1px solid #b4b4b4;border-radius:3px;"></div>
<div class="t" style="left:370px;top:800px;font-size:12px;color:#8c8c8c;width:80px;text-align:center;">删除<span class="as">(<u>D</u>)</span></div>
</body></html>
